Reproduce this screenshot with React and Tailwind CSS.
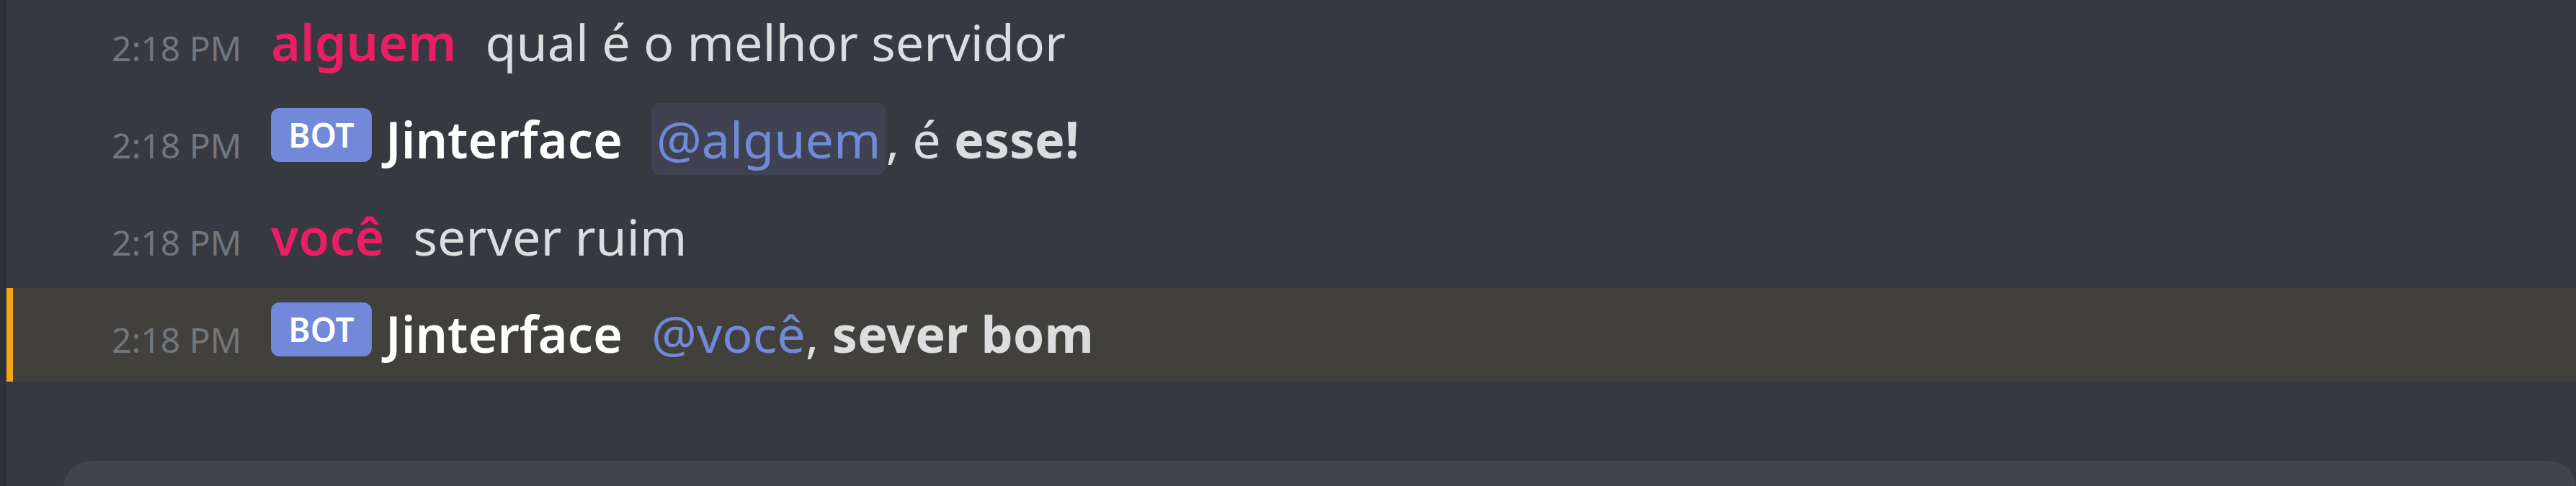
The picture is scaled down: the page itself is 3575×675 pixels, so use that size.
import clsx from 'clsx'

const FONT = "font-['Noto_Sans',sans-serif]"

function BotTag() {
  return (
    <span className="mr-[19px] inline-block h-[75px] w-[140px] rounded-[12px] bg-[#7289da] text-center align-[15px] text-[46px] font-semibold leading-[75px] text-white">
      BOT
    </span>
  )
}

function Mention({ name, plain }) {
  return (
    <span
      className={clsx(
        'text-[#7289da]',
        plain ? '' : 'rounded-[12px] bg-[#3e4251] px-[7px] py-[2px]',
      )}
    >
      @{name}
    </span>
  )
}

function Message({ time, author, authorColor, bot, highlight, children }) {
  return (
    <div
      className={clsx(
        'h-[130px] whitespace-nowrap leading-[126px]',
        highlight
          ? 'border-l-[9px] border-[#faa61a] bg-[#42403c] pl-[137px]'
          : 'pl-[146px]',
      )}
    >
      <span className="inline-block w-[221px] text-[48px] text-[#72767d]">
        {time}
      </span>
      {bot && <BotTag />}
      <span className={clsx('mr-[40px] font-semibold', authorColor)}>
        {author}
      </span>
      <span className="text-[#dcddde]">{children}</span>
    </div>
  )
}

export default function App() {
  return (
    <div className={clsx('flex h-[675px] w-full overflow-hidden', FONT)}>
      <div className="w-[9px] shrink-0 bg-[#2f3136]" />
      <div className="flex flex-1 flex-col bg-[#36393f] text-[70px]">
        <div className="-mt-[5px] flex flex-col gap-[5px]">
          <Message time="2:18 PM" author="alguem" authorColor="text-[#e91e63]">
            qual é o melhor servidor
          </Message>
          <Message time="2:18 PM" author="Jinterface" authorColor="text-white" bot>
            <Mention name="alguem" />, é <b className="font-bold">esse!</b>
          </Message>
          <Message time="2:18 PM" author="você" authorColor="text-[#e91e63]">
            server ruim
          </Message>
          <Message
            time="2:18 PM"
            author="Jinterface"
            authorColor="text-white"
            bot
            highlight
          >
            <Mention name="você" plain />, <b className="font-bold">sever bom</b>
          </Message>
        </div>
        <div className="ml-[79px] mt-[110px] h-[80px] shrink-0 rounded-[38px] bg-[#40444b]" />
      </div>
    </div>
  )
}
